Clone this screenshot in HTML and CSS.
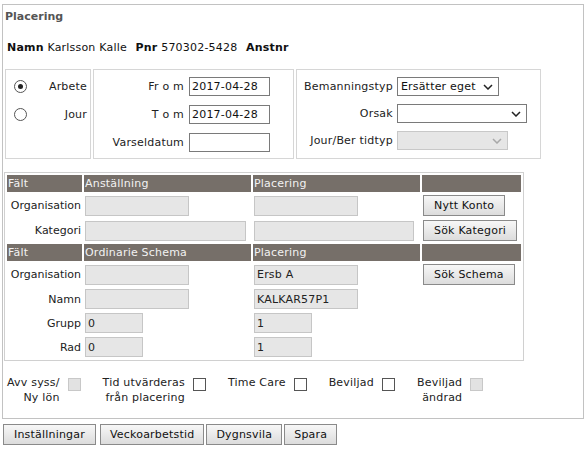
FILE: index.html
```html
<!DOCTYPE html>
<html lang="sv">
<head>
<meta charset="utf-8">
<title>Placering</title>
<link rel="stylesheet" href="styles.css">
</head>
<body>
<div class="panel">
  <div class="title">Placering</div>
  <div class="person"><b>Namn</b> Karlsson Kalle <b class="key">Pnr</b> 570302-5428 <b class="key">Anstnr</b></div>

  <div class="top">
    <div class="box box-type">
      <div class="radio-row"><span class="radio checked"></span><span>Arbete</span></div>
      <div class="radio-row"><span class="radio"></span><span>Jour</span></div>
    </div>
    <div class="box box-dates">
      <div class="frow"><span>Fr o m</span><input class="date" value="2017-04-28"></div>
      <div class="frow"><span>T o m</span><input class="date" value="2017-04-28"></div>
      <div class="frow"><span>Varseldatum</span><input class="date" value=""></div>
    </div>
    <div class="box box-sel">
      <span class="slbl">Bemanningstyp</span>
      <span class="select w-bem"><span class="stext">Ersätter eget</span><svg class="chev" width="10" height="6" viewBox="0 0 10 6"><path d="M1 1 L5 5 L9 1" /></svg></span>
      <span class="slbl">Orsak</span>
      <span class="select w-orsak"><span class="stext"></span><svg class="chev" width="10" height="6" viewBox="0 0 10 6"><path d="M1 1 L5 5 L9 1" /></svg></span>
      <span class="slbl">Jour/Ber tidtyp</span>
      <span class="select w-jour disabled"><span class="stext"></span><svg class="chev" width="10" height="6" viewBox="0 0 10 6"><path d="M1 1 L5 5 L9 1" /></svg></span>
    </div>
  </div>

  <div class="grid-box">
    <table class="grid">
      <colgroup><col class="c-lbl"><col class="c-mid"><col class="c-mid"><col class="c-btn"></colgroup>
      <tr><th>Fält</th><th>Anställning</th><th>Placering</th><th></th></tr>
      <tr><td class="lbl">Organisation</td><td><span class="fld in-m"></span></td><td><span class="fld in-m"></span></td><td><button class="btn">Nytt Konto</button></td></tr>
      <tr><td class="lbl">Kategori</td><td><span class="fld in-l"></span></td><td><span class="fld in-l2"></span></td><td><button class="btn">Sök Kategori</button></td></tr>
      <tr><th>Fält</th><th>Ordinarie Schema</th><th>Placering</th><th></th></tr>
      <tr><td class="lbl">Organisation</td><td><span class="fld in-m"></span></td><td><span class="fld in-m">Ersb A</span></td><td><button class="btn">Sök Schema</button></td></tr>
      <tr><td class="lbl">Namn</td><td><span class="fld in-m"></span></td><td><span class="fld in-m">KALKAR57P1</span></td><td></td></tr>
      <tr><td class="lbl">Grupp</td><td><span class="fld in-s">0</span></td><td><span class="fld in-s">1</span></td><td></td></tr>
      <tr><td class="lbl">Rad</td><td><span class="fld in-s">0</span></td><td><span class="fld in-s">1</span></td><td></td></tr>
    </table>
  </div>

  <div class="checks">
    <div class="citem"><span class="clbl">Avv syss/<br>Ny lön</span><span class="cb disabled"></span></div>
    <div class="citem"><span class="clbl">Tid utvärderas<br>från placering</span><span class="cb"></span></div>
    <div class="citem"><span class="clbl">Time Care</span><span class="cb"></span></div>
    <div class="citem"><span class="clbl">Beviljad</span><span class="cb"></span></div>
    <div class="citem"><span class="clbl">Beviljad<br>ändrad</span><span class="cb disabled"></span></div>
  </div>
</div>

<div class="actions">
  <button class="btn first">Inställningar</button>
  <button class="btn">Veckoarbetstid</button>
  <button class="btn">Dygnsvila</button>
  <button class="btn">Spara</button>
</div>
</body>
</html>
```

FILE: styles.css
```css
* { box-sizing: border-box; }

body {
  margin: 0;
  font-family: "DejaVu Sans", Verdana, sans-serif;
  font-size: 11px;
  letter-spacing: 0.2px;
  color: #222;
  background: #fff;
}

.panel {
  width: 582px;
  margin: 4px 0 0 2px;
  border: 1px solid #c2c2c2;
  padding: 5px 0 13px 0;
}

.title {
  font-weight: bold;
  color: #555;
  line-height: 13px;
  padding-left: 2px;
  letter-spacing: 0;
}

.person {
  margin-top: 18px;
  line-height: 13px;
  padding-left: 4px;
  color: #111;
}
.person .key { margin-left: 5px; }

/* top boxes */
.top {
  display: flex;
  gap: 2px;
  margin-top: 15px;
  padding-left: 2px;
}
.box {
  border: 1px solid #d6d6d6;
  height: 90px;
}
.box-type {
  width: 86px;
  padding: 6px 3px 0 8px;
  display: flex;
  flex-direction: column;
  gap: 8px;
}
.radio-row {
  height: 20px;
  display: flex;
  align-items: center;
  justify-content: space-between;
}
.radio {
  width: 13px;
  height: 13px;
  border: 1px solid #555;
  border-radius: 50%;
  background: #fff;
  display: flex;
  align-items: center;
  justify-content: center;
}
.radio.checked::after {
  content: "";
  width: 5px;
  height: 5px;
  border-radius: 50%;
  background: #222;
}

.box-dates {
  width: 201px;
  padding: 6px 23px 0 0;
  display: flex;
  flex-direction: column;
  gap: 8px;
}
.frow {
  height: 20px;
  display: flex;
  align-items: center;
  justify-content: flex-end;
  gap: 5px;
}
.date {
  width: 81px;
  height: 19px;
  border: 1px solid #7a7a7a;
  padding: 0 2px;
  font-family: "DejaVu Sans", Verdana, sans-serif;
  font-size: 11px;
  letter-spacing: 0.2px;
  color: #111;
  background: #fff;
}

.box-sel {
  width: 245px;
  padding: 6px 0 0 7px;
  display: grid;
  grid-template-columns: auto auto;
  grid-auto-rows: 20px;
  justify-content: start;
  column-gap: 4px;
  row-gap: 7px;
  align-items: center;
}
.slbl { justify-self: end; }
.select {
  position: relative;
  display: flex;
  align-items: center;
  height: 19px;
  border: 1px solid #7a7a7a;
  background: #fff;
  padding-left: 3px;
  color: #111;
}
.select.disabled {
  background: #e6e6e6;
  border-color: #c8c8c8;
}
.w-bem { width: 102px; }
.w-orsak { width: 130px; }
.w-jour { width: 111px; }
.chev {
  position: absolute;
  right: 5px;
  top: 6px;
}
.chev path {
  fill: none;
  stroke: #222;
  stroke-width: 1.5;
}
.select.disabled .chev path { stroke: #a8a8a8; }

/* grid */
.grid-box {
  width: 520px;
  margin: 13px 0 0 1px;
  border: 1px solid #d0d0d0;
}
.grid {
  table-layout: fixed;
  width: 518px;
  border-collapse: separate;
  border-spacing: 2px;
  font-size: 11px;
}
.c-lbl { width: 75px; }
.c-mid { width: 167px; }
.c-btn { width: 99px; }
.grid th {
  height: 17px;
  padding: 0 1px;
  background: #766f69;
  color: #f2f2f2;
  font-weight: normal;
  text-align: left;
  line-height: 15px;
}
.grid td {
  padding: 1px;
  vertical-align: middle;
}
.grid td.lbl {
  text-align: right;
  color: #222;
  letter-spacing: 0;
}
.fld {
  display: flex;
  align-items: center;
  height: 20px;
  border: 1px solid #c6c6c6;
  background: #e6e6e6;
  padding-left: 2px;
  color: #222;
}
.in-m { width: 104px; }
.in-l { width: 161px; }
.in-l2 { width: 160px; }
.in-s { width: 58px; }

.btn {
  height: 21px;
  padding: 0 10px;
  border: 1px solid #8a8a8a;
  background: linear-gradient(#f7f7f7, #dcdcdc);
  font-family: "DejaVu Sans", Verdana, sans-serif;
  font-size: 11px;
  letter-spacing: 0.2px;
  color: #111;
  border-radius: 0;
  display: block;
}

/* checkboxes */
.checks {
  display: flex;
  gap: 22px;
  margin-top: 14px;
  padding-left: 4px;
}
.citem {
  display: flex;
  align-items: flex-start;
  gap: 8px;
}
.clbl {
  text-align: right;
  line-height: 15px;
  color: #222;
}
.cb {
  width: 13px;
  height: 13px;
  margin-top: 3px;
  border: 1px solid #555;
  background: #fff;
}
.cb.disabled {
  background: #e2e2e2;
  border-color: #c8c8c8;
}

/* actions */
.actions {
  display: flex;
  gap: 2px;
  margin: 5px 0 0 3px;
}
.actions .btn { padding: 0 9px; }
.actions .first { padding: 0 10px; margin-right: 2px; }
```
